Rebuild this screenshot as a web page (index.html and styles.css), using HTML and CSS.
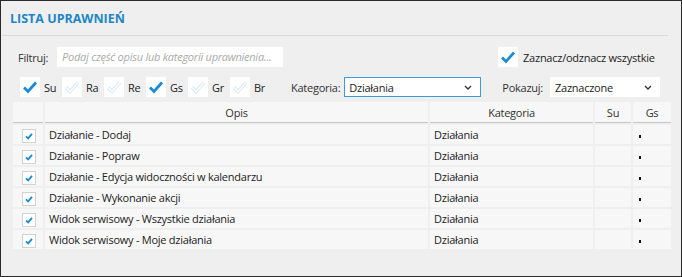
FILE: index.html
```html
<!DOCTYPE html>
<html lang="pl">
<head>
    <meta charset="UTF-8">
    <title>Lista uprawnień</title>
    <link rel="stylesheet" href="styles.css">
</head>
<body>
    <div class="panel">
        <h2 class="title">LISTA UPRAWNIEŃ</h2>

        <div class="toolbar">
            <div class="bar-row">
                <label class="lbl">Filtruj:</label>
                <div class="search">Podaj część opisu lub kategorii uprawnienia...</div>
                <div class="check-all">
                    <span class="box on">
                        <svg viewBox="0 0 20 20"><path d="M4 10.5 L8 14.5 L16 5.5"/></svg>
                    </span>
                    <span>Zaznacz/odznacz wszystkie</span>
                </div>
            </div>

            <div class="bar-row">
                <div class="cols">
                    <div class="col-toggle"><span class="box on"><svg viewBox="0 0 20 20"><path d="M4 10.5 L8 14.5 L16 5.5"/></svg></span>Su</div>
                    <div class="col-toggle"><span class="box off"><svg viewBox="0 0 20 20"><path class="ol" d="M4 10.5 L8 14.5 L16 5.5"/><path d="M4 10.5 L8 14.5 L16 5.5"/></svg></span>Ra</div>
                    <div class="col-toggle"><span class="box off"><svg viewBox="0 0 20 20"><path class="ol" d="M4 10.5 L8 14.5 L16 5.5"/><path d="M4 10.5 L8 14.5 L16 5.5"/></svg></span>Re</div>
                    <div class="col-toggle"><span class="box on"><svg viewBox="0 0 20 20"><path d="M4 10.5 L8 14.5 L16 5.5"/></svg></span>Gs</div>
                    <div class="col-toggle"><span class="box off"><svg viewBox="0 0 20 20"><path class="ol" d="M4 10.5 L8 14.5 L16 5.5"/><path d="M4 10.5 L8 14.5 L16 5.5"/></svg></span>Gr</div>
                    <div class="col-toggle"><span class="box off"><svg viewBox="0 0 20 20"><path class="ol" d="M4 10.5 L8 14.5 L16 5.5"/><path d="M4 10.5 L8 14.5 L16 5.5"/></svg></span>Br</div>
                </div>
                <label class="lbl lbl-kat">Kategoria:</label>
                <div class="select select-kat">
                    <span>Działania</span>
                    <svg viewBox="0 0 8 5"><path d="M1 1 L4 4 L7 1"/></svg>
                </div>
                <label class="lbl lbl-pok">Pokazuj:</label>
                <div class="select select-pok">
                    <span>Zaznaczone</span>
                    <svg viewBox="0 0 8 5"><path d="M1 1 L4 4 L7 1"/></svg>
                </div>
            </div>
        </div>

        <table class="grid">
            <thead>
                <tr>
                    <th class="c-chk"></th>
                    <th class="c-opis">Opis</th>
                    <th class="c-kat">Kategoria</th>
                    <th class="c-su">Su</th>
                    <th class="c-gs">Gs</th>
                </tr>
            </thead>
            <tbody>
                <tr>
                    <td class="c-chk"><span class="mini"><svg viewBox="0 0 14 14"><path d="M3.5 7.5 L6 9.8 L10.5 4.5"/></svg></span></td>
                    <td>Działanie - Dodaj</td>
                    <td>Działania</td>
                    <td></td>
                    <td class="dot-cell"><span class="dot"></span></td>
                </tr>
                <tr>
                    <td class="c-chk"><span class="mini"><svg viewBox="0 0 14 14"><path d="M3.5 7.5 L6 9.8 L10.5 4.5"/></svg></span></td>
                    <td>Działanie - Popraw</td>
                    <td>Działania</td>
                    <td></td>
                    <td class="dot-cell"><span class="dot"></span></td>
                </tr>
                <tr>
                    <td class="c-chk"><span class="mini"><svg viewBox="0 0 14 14"><path d="M3.5 7.5 L6 9.8 L10.5 4.5"/></svg></span></td>
                    <td>Działanie - Edycja widoczności w kalendarzu</td>
                    <td>Działania</td>
                    <td></td>
                    <td class="dot-cell"><span class="dot"></span></td>
                </tr>
                <tr>
                    <td class="c-chk"><span class="mini"><svg viewBox="0 0 14 14"><path d="M3.5 7.5 L6 9.8 L10.5 4.5"/></svg></span></td>
                    <td>Działanie - Wykonanie akcji</td>
                    <td>Działania</td>
                    <td></td>
                    <td class="dot-cell"><span class="dot"></span></td>
                </tr>
                <tr>
                    <td class="c-chk"><span class="mini"><svg viewBox="0 0 14 14"><path d="M3.5 7.5 L6 9.8 L10.5 4.5"/></svg></span></td>
                    <td>Widok serwisowy - Wszystkie działania</td>
                    <td>Działania</td>
                    <td></td>
                    <td class="dot-cell"><span class="dot"></span></td>
                </tr>
                <tr>
                    <td class="c-chk"><span class="mini"><svg viewBox="0 0 14 14"><path d="M3.5 7.5 L6 9.8 L10.5 4.5"/></svg></span></td>
                    <td>Widok serwisowy - Moje działania</td>
                    <td>Działania</td>
                    <td></td>
                    <td class="dot-cell"><span class="dot"></span></td>
                </tr>
            </tbody>
        </table>
    </div>
</body>
</html>
```

FILE: styles.css
```css
* {
    margin: 0;
    padding: 0;
    box-sizing: border-box;
}

body {
    font-family: 'Open Sans', 'Noto Sans', sans-serif;
    font-size: 11px;
    letter-spacing: -0.25px;
    color: #222;
    background: #efefef;
}

.panel {
    width: 682px;
    height: 277px;
    border: 1px solid #2a2a2a;
    background: #efefef;
}

.title {
    margin: 0 13px 0 1px;
    padding: 9px 0 8px 8px;
    height: 35px;
    font-size: 12.5px;
    font-weight: bold;
    letter-spacing: 0;
    color: #1c86c6;
    border-bottom: 1px solid #d9d9d9;
}

.toolbar {
    padding: 11px 0 0 17px;
}

.bar-row {
    display: flex;
    align-items: center;
    height: 20px;
}

.bar-row + .bar-row {
    margin-top: 10px;
}

.lbl {
    color: #333;
}

.search {
    width: 226px;
    height: 20px;
    margin-left: 9px;
    padding: 2px 0 0 5px;
    background: #fff;
    color: #aaa;
    font-style: italic;
}

.check-all {
    display: flex;
    align-items: center;
    gap: 5px;
    margin-left: 215px;
}

.box {
    display: inline-flex;
    width: 20px;
    height: 20px;
    background: #fff;
}

.box svg {
    width: 20px;
    height: 20px;
    fill: none;
    stroke-linecap: butt;
}

.box.on path {
    stroke: #1a8bd5;
    stroke-width: 2.8;
}

.box.off path {
    stroke: #fff;
    stroke-width: 1.6;
}

.box.off path.ol {
    stroke: #cfe5f3;
    stroke-width: 3.2;
}

.cols {
    display: flex;
    margin-left: 2px;
}

.col-toggle {
    display: flex;
    align-items: center;
    gap: 4px;
    width: 42px;
}

.lbl-kat {
    margin-left: 19px;
}

.select {
    display: flex;
    align-items: center;
    justify-content: space-between;
    height: 20px;
    margin-left: 4px;
    padding: 0 8px 0 5px;
    background: #fff;
}

.select svg {
    width: 8px;
    height: 5px;
    fill: none;
    stroke: #333;
    stroke-width: 1.4;
}

.select-kat {
    width: 137px;
    border: 1px solid #3d9bd9;
    padding-left: 4px;
}

.lbl-pok {
    margin-left: 21px;
}

.select-pok {
    width: 110px;
    margin-left: 7px;
}

.grid {
    margin: 3px 0 0 10px;
    width: 660px;
    border-spacing: 2px;
    table-layout: fixed;
}

.grid th,
.grid td {
    background: #f7f7f7;
    height: 19px;
    padding: 0 4px;
    white-space: nowrap;
    overflow: hidden;
}

.grid th {
    height: 21px;
    font-weight: normal;
    color: #333;
    text-align: center;
    border-bottom: 1px solid #c4c4c4;
}

.c-chk { width: 30px; }
.c-opis { width: 383px; }
.c-kat { width: 163px; }
.c-su { width: 36px; }
.c-gs { width: 38px; }

.grid td.c-chk {
    padding: 0;
    text-align: center;
}

.mini {
    display: inline-flex;
    width: 14px;
    height: 14px;
    margin: 3px 0 0 2px;
    background: #fff;
    border: 1px solid #d2d2d2;
    vertical-align: top;
}

.mini svg {
    width: 12px;
    height: 12px;
    fill: none;
    stroke: #1a8bd5;
    stroke-width: 2.2;
}

.dot-cell {
    padding-left: 6px !important;
}

.dot {
    display: inline-block;
    width: 2px;
    height: 3px;
    background: #111;
    vertical-align: middle;
}
```
